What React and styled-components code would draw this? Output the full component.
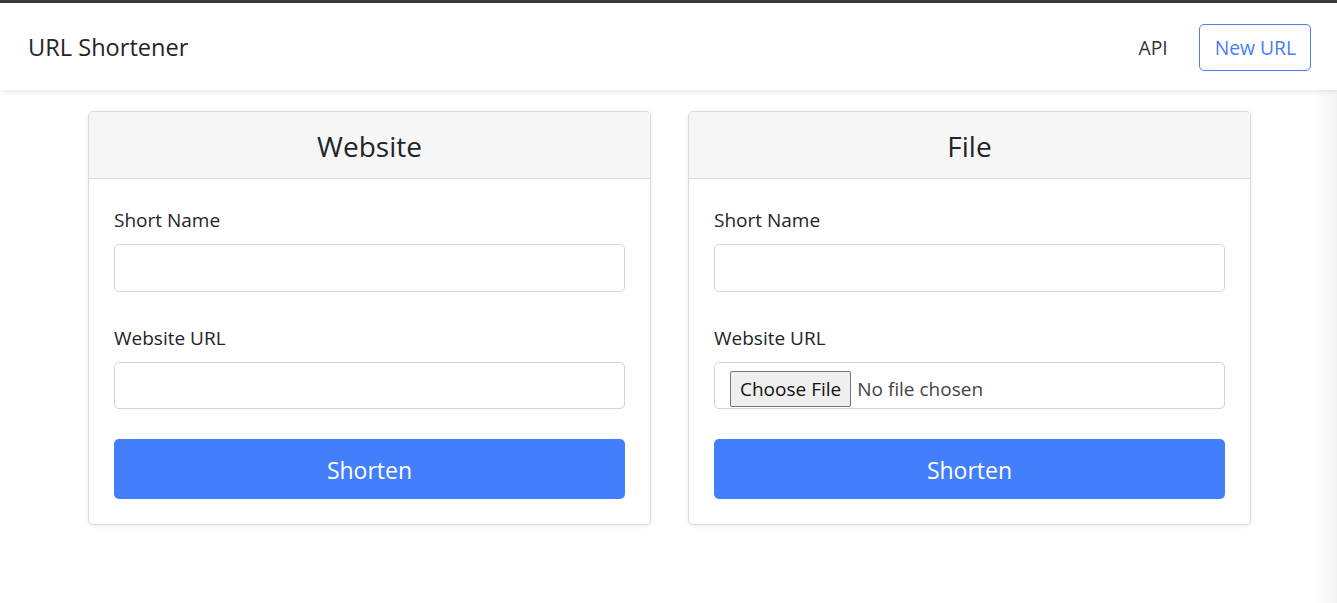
import React from 'react'
import styled, { createGlobalStyle } from 'styled-components'

const GlobalStyle = createGlobalStyle`
    * { box-sizing: border-box; }
    body {
        margin: 0;
        font-family: 'Open Sans', 'Noto Sans', sans-serif;
        color: #212529;
        background: linear-gradient(to right, #fff 0, #fff calc(100% - 22px), #f3f3f3 100%);
        min-height: 603px;
    }
`

const Nav = styled.nav`
    height: 90px;
    border-top: 3px solid #3b3b3b;
    background: #fff;
    display: flex;
    align-items: center;
    justify-content: space-between;
    padding: 1px 26px 0 28px;
    box-shadow: 0 1px 6px rgba(0, 0, 0, 0.12);
`

const Brand = styled.div`
    font-size: 23.6px;
`

const NavLinks = styled.div`
    display: flex;
    align-items: center;
    gap: 31px;
`

const NavLink = styled.a`
    font-size: 19.3px;
    color: #333;
    text-decoration: none;
`

const OutlineButton = styled.a`
    font-size: 19.3px;
    color: #4a7cf7;
    border: 1px solid #4a7cf7;
    border-radius: 5px;
    height: 47px;
    padding: 0 14px 0 15px;
    display: flex;
    align-items: center;
    text-decoration: none;
`

const Main = styled.main`
    display: grid;
    grid-template-columns: 563px 563px;
    justify-content: center;
    gap: 37px;
    padding-top: 21px;
    padding-left: 2px;
`

const Card = styled.section`
    border: 1px solid #dcdcdc;
    border-radius: 5px;
    background: #fff;
    box-shadow: 0 1px 4px rgba(0, 0, 0, 0.08);
    overflow: hidden;
`

const CardHeader = styled.h2`
    margin: 0;
    height: 67px;
    padding-top: 2px;
    display: flex;
    align-items: center;
    justify-content: center;
    background: #f6f6f6;
    border-bottom: 1px solid #dcdcdc;
    font-size: 28px;
    font-weight: 400;
`

const CardBody = styled.div`
    padding: 27px 25px 25px 25px;
    display: flex;
    flex-direction: column;
`

const Label = styled.label`
    font-size: 19px;
    line-height: 28px;
    margin-top: ${p => (p.$first ? '0' : '32px')};
    margin-bottom: 10px;
`

const Field = styled.div`
    height: ${p => p.$h || 48}px;
    border: 1px solid #d2d4d8;
    border-radius: 5px;
    background: #fff;
    display: flex;
    align-items: center;
    padding: 0 0 0 15px;
`

const TextInput = styled.input`
    border: none;
    outline: none;
    width: 100%;
    height: 100%;
    font: inherit;
    font-size: 18px;
    background: transparent;
`

const FileInput = styled.input`
    font-family: 'Open Sans', 'Noto Sans', sans-serif;
    font-size: 19px;
    color: #444;
    margin-top: 6px;

    &::file-selector-button {
        font: inherit;
        color: #111;
        background: #efefef;
        border: 1px solid #767676;
        border-radius: 2px;
        height: 36px;
        padding: 0 9px;
        margin-right: 6px;
    }
`

const Submit = styled.button`
    margin-top: 30px;
    height: 60px;
    padding-top: 2px;
    border: none;
    border-radius: 5px;
    background: #437efd;
    color: #fff;
    font-family: 'Open Sans', 'Noto Sans', sans-serif;
    font-size: 23px;
`

function ShortenCard({ title, file }) {
    return (
        <Card>
            <CardHeader>{title}</CardHeader>
            <CardBody>
                <Label $first>Short Name</Label>
                <Field>
                    <TextInput type="text" />
                </Field>
                <Label>Website URL</Label>
                <Field $h={47}>
                    {file ? <FileInput type="file" /> : <TextInput type="text" />}
                </Field>
                <Submit>Shorten</Submit>
            </CardBody>
        </Card>
    )
}

export default function App() {
    return (
        <>
            <GlobalStyle />
            <Nav>
                <Brand>URL Shortener</Brand>
                <NavLinks>
                    <NavLink href="#">API</NavLink>
                    <OutlineButton href="#">New URL</OutlineButton>
                </NavLinks>
            </Nav>
            <Main>
                <ShortenCard title="Website" />
                <ShortenCard title="File" file />
            </Main>
        </>
    )
}
